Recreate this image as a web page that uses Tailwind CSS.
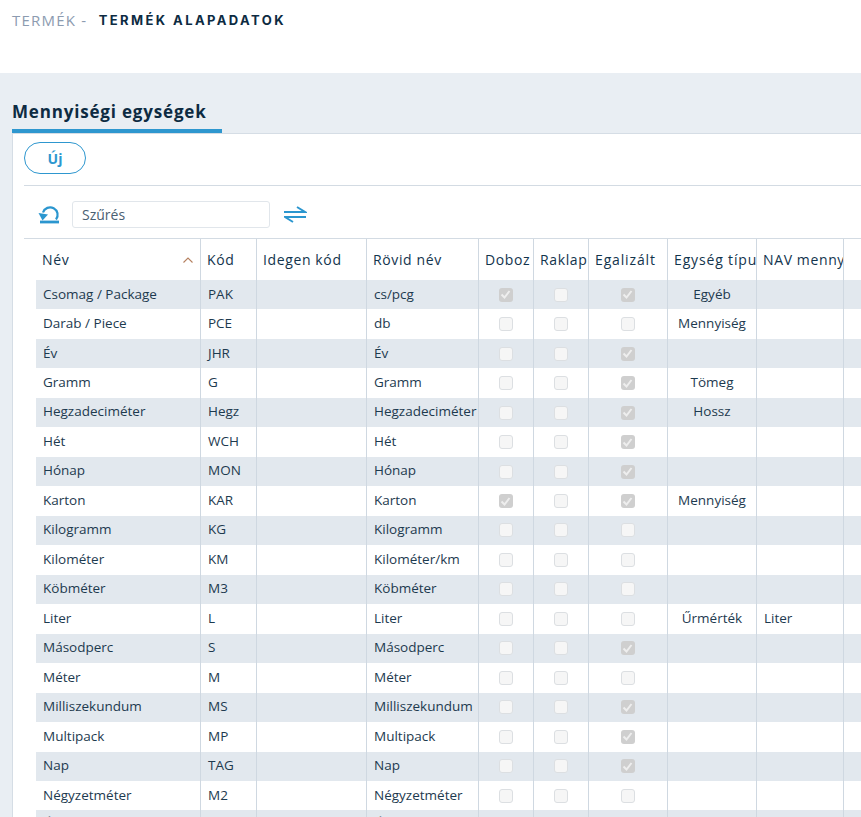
<!DOCTYPE html>
<html lang="hu"><head><meta charset="utf-8"><script src="https://cdn.jsdelivr.net/npm/@tailwindcss/browser@4"></script></head>
<body class="m-0 h-[817px] overflow-hidden bg-[#e9eef3] font-['Open_Sans','Noto_Sans',sans-serif] text-[14px] text-[#12344d]">
<header class="h-[73px] bg-white pl-3 pt-[10px] flex items-start gap-[11.500px] leading-[20px]">
  <span class="text-[15px] tracking-[1.2px] text-[#8c9bb0]">TERMÉK -</span>
  <span class="font-['Inter',sans-serif] text-[13px] font-bold tracking-[2.4px] text-[#0d2b42]">TERMÉK ALAPADATOK</span>
</header>
<div class="h-[60px] pl-3 flex items-end">
  <h2 class="w-[210px] h-[32px] border-b-4 border-[#2e97cf] text-[17px] font-bold leading-[22px] tracking-[0.82px] text-[#0d2b42]">Mennyiségi egységek</h2>
</div>
<section class="ml-3 h-[684px] overflow-hidden border-l border-t border-[#d5dde5] bg-white pl-[11px]">
  <div class="h-[52px] border-b border-[#d3dbe3] pt-[8px]">
    <button class="block h-[32px] w-[62px] rounded-full border border-[#2e97cf] text-[14px] font-bold text-[#2e97cf]">Új</button>
  </div>
  <div class="h-[53px] border-b border-[#d3dbe3] flex items-center pl-[14px] pt-[5px]">
    <svg class="w-[22px] h-[21px]" viewBox="0 0 22 21" fill="none" stroke="#2b96cf" stroke-width="2.200"><path d="M2 18 H21" stroke-width="2.800"/><path d="M18 15.500 A7.500 7.500 0 1 0 5 8.500"/><path d="M.5 9 L10 10.500 L4.500 16.500 Z" stroke="none" fill="#2b96cf"/></svg>
    <input class="ml-[12px] h-[27px] w-[198px] rounded-[3px] border border-[#e1e6eb] px-[9px] text-[14px] text-[#4a6072] placeholder:text-[#4a6072]" placeholder="Szűrés">
    <svg class="ml-[14px] w-[23px] h-[17px]" viewBox="0 0 23 17" fill="none" stroke="#2b96cf" stroke-width="2"><path d="M0 6 H21 L13 1"/><path d="M22 11 H1 L9 16"/></svg>
  </div>
  <div class="grid grid-cols-[177px_56px_110px_112px_55px_55px_79px_89px_87px_1fr] h-[41px] items-center text-[14px] leading-[20px] tracking-[0.62px] whitespace-nowrap [&>div]:h-full [&>div]:flex [&>div]:items-center [&>div]:overflow-hidden [&>div]:border-r [&>div]:border-[#cfd8e1]">
    <div class="pl-[18px] justify-between pr-[7px]"><span>Név</span><svg class="w-[10px] h-[6px]" viewBox="0 0 10 6" fill="none" stroke="#b5805f" stroke-width="1.100"><path d="M.5 5.500 5 1l4.500 4.500"/></svg></div>
    <div class="pl-[6px]">Kód</div><div class="pl-[6px]">Idegen kód</div><div class="pl-[6px]">Rövid név</div>
    <div class="pl-[6px]">Doboz</div><div class="pl-[6px]">Raklap</div><div class="pl-[6px] tracking-[0.85px]">Egalizált</div><div class="pl-[6px] tracking-[0.85px]">Egység típus</div><div class="pl-[6px]">NAV mennyiség</div><div class="!border-r-0"></div>
  </div>
  <div class="ml-3 text-[13.5px] text-[#1d3a4f] whitespace-nowrap
    [&>div]:grid [&>div]:grid-cols-[165px_56px_110px_112px_55px_55px_79px_89px_87px_1fr] [&>div]:h-[29.47px]
    [&>div:nth-child(odd)]:bg-[#e2e8ee]
    [&>div>div]:flex [&>div>div]:items-center [&>div>div]:overflow-hidden [&>div>div]:border-r [&>div>div]:border-[#cfd8e1] [&>div>div]:pl-[7px] [&>div>div]:pb-[2px]
    [&>div>div:nth-child(n+5)]:pl-0 [&>div>div:nth-child(n+5)]:justify-center [&>div>div:nth-child(n+9)]:justify-start [&>div>div:nth-child(n+9)]:pl-[7px] [&>div>div:last-child]:border-r-0
    [&_i]:block [&_i]:size-[14px] [&_i]:mt-[2px] [&_i]:mr-[1px] [&_i]:rounded-[3px] [&_i]:border [&_i]:border-[#dcdfe2] [&_i]:bg-[#f6f6f6]
    [&_b]:flex [&_b]:items-center [&_b]:justify-center [&_b]:size-[14px] [&_b]:mt-[2px] [&_b]:mr-[1px] [&_b]:rounded-[3px] [&_b]:bg-[#cfcfcf]
    [&_svg]:size-[11px] [&_svg]:fill-none [&_svg]:stroke-[#eeeeee] [&_svg]:stroke-2">
    <div><div>Csomag / Package</div><div>PAK</div><div></div><div>cs/pcg</div><div><b><svg viewBox="0 0 11 11"><path d="M1.500 5.500 4.500 8.500 9.500 2"/></svg></b></div><div><i></i></div><div><b><svg viewBox="0 0 11 11"><path d="M1.500 5.500 4.500 8.500 9.500 2"/></svg></b></div><div>Egyéb</div><div></div><div></div></div>
    <div><div>Darab / Piece</div><div>PCE</div><div></div><div>db</div><div><i></i></div><div><i></i></div><div><i></i></div><div>Mennyiség</div><div></div><div></div></div>
    <div><div>Év</div><div>JHR</div><div></div><div>Év</div><div><i></i></div><div><i></i></div><div><b><svg viewBox="0 0 11 11"><path d="M1.500 5.500 4.500 8.500 9.500 2"/></svg></b></div><div></div><div></div><div></div></div>
    <div><div>Gramm</div><div>G</div><div></div><div>Gramm</div><div><i></i></div><div><i></i></div><div><b><svg viewBox="0 0 11 11"><path d="M1.500 5.500 4.500 8.500 9.500 2"/></svg></b></div><div>Tömeg</div><div></div><div></div></div>
    <div><div>Hegzadeciméter</div><div>Hegz</div><div></div><div>Hegzadeciméter</div><div><i></i></div><div><i></i></div><div><b><svg viewBox="0 0 11 11"><path d="M1.500 5.500 4.500 8.500 9.500 2"/></svg></b></div><div>Hossz</div><div></div><div></div></div>
    <div><div>Hét</div><div>WCH</div><div></div><div>Hét</div><div><i></i></div><div><i></i></div><div><b><svg viewBox="0 0 11 11"><path d="M1.500 5.500 4.500 8.500 9.500 2"/></svg></b></div><div></div><div></div><div></div></div>
    <div><div>Hónap</div><div>MON</div><div></div><div>Hónap</div><div><i></i></div><div><i></i></div><div><b><svg viewBox="0 0 11 11"><path d="M1.500 5.500 4.500 8.500 9.500 2"/></svg></b></div><div></div><div></div><div></div></div>
    <div><div>Karton</div><div>KAR</div><div></div><div>Karton</div><div><b><svg viewBox="0 0 11 11"><path d="M1.500 5.500 4.500 8.500 9.500 2"/></svg></b></div><div><i></i></div><div><b><svg viewBox="0 0 11 11"><path d="M1.500 5.500 4.500 8.500 9.500 2"/></svg></b></div><div>Mennyiség</div><div></div><div></div></div>
    <div><div>Kilogramm</div><div>KG</div><div></div><div>Kilogramm</div><div><i></i></div><div><i></i></div><div><i></i></div><div></div><div></div><div></div></div>
    <div><div>Kilométer</div><div>KM</div><div></div><div>Kilométer/km</div><div><i></i></div><div><i></i></div><div><i></i></div><div></div><div></div><div></div></div>
    <div><div>Köbméter</div><div>M3</div><div></div><div>Köbméter</div><div><i></i></div><div><i></i></div><div><i></i></div><div></div><div></div><div></div></div>
    <div><div>Liter</div><div>L</div><div></div><div>Liter</div><div><i></i></div><div><i></i></div><div><i></i></div><div>Űrmérték</div><div>Liter</div><div></div></div>
    <div><div>Másodperc</div><div>S</div><div></div><div>Másodperc</div><div><i></i></div><div><i></i></div><div><b><svg viewBox="0 0 11 11"><path d="M1.500 5.500 4.500 8.500 9.500 2"/></svg></b></div><div></div><div></div><div></div></div>
    <div><div>Méter</div><div>M</div><div></div><div>Méter</div><div><i></i></div><div><i></i></div><div><i></i></div><div></div><div></div><div></div></div>
    <div><div>Milliszekundum</div><div>MS</div><div></div><div>Milliszekundum</div><div><i></i></div><div><i></i></div><div><b><svg viewBox="0 0 11 11"><path d="M1.500 5.500 4.500 8.500 9.500 2"/></svg></b></div><div></div><div></div><div></div></div>
    <div><div>Multipack</div><div>MP</div><div></div><div>Multipack</div><div><i></i></div><div><i></i></div><div><b><svg viewBox="0 0 11 11"><path d="M1.500 5.500 4.500 8.500 9.500 2"/></svg></b></div><div></div><div></div><div></div></div>
    <div><div>Nap</div><div>TAG</div><div></div><div>Nap</div><div><i></i></div><div><i></i></div><div><b><svg viewBox="0 0 11 11"><path d="M1.500 5.500 4.500 8.500 9.500 2"/></svg></b></div><div></div><div></div><div></div></div>
    <div><div>Négyzetméter</div><div>M2</div><div></div><div>Négyzetméter</div><div><i></i></div><div><i></i></div><div><i></i></div><div></div><div></div><div></div></div>
    <div><div>Óra</div><div></div><div></div><div>Óra</div><div><i></i></div><div><i></i></div><div><b><svg viewBox="0 0 11 11"><path d="M1.500 5.500 4.500 8.500 9.500 2"/></svg></b></div><div></div><div></div><div></div></div>
  </div>
</section>
</body></html>
